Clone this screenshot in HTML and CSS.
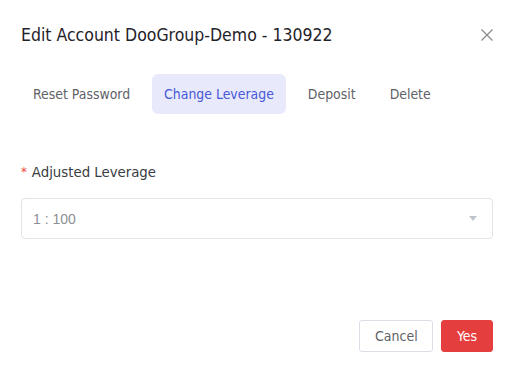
FILE: index.html
```html
<!DOCTYPE html>
<html lang="en">
<head>
    <meta charset="UTF-8">
    <title>Edit Account</title>
    <link rel="stylesheet" href="styles.css">
</head>
<body>
    <div class="dialog">
        <header class="dialog-header">
            <h2 class="dialog-title">Edit Account DooGroup-Demo - 130922</h2>
            <button class="close-btn" aria-label="Close">
                <svg width="12" height="12" viewBox="0 0 12 12">
                    <path d="M0.5 0.5 L11.5 11.5 M11.5 0.5 L0.5 11.5" stroke="#8a8a8a" stroke-width="1.2" fill="none"/>
                </svg>
            </button>
        </header>

        <nav class="tabs">
            <a href="#" class="tab">Reset Password</a>
            <a href="#" class="tab active">Change Leverage</a>
            <a href="#" class="tab">Deposit</a>
            <a href="#" class="tab">Delete</a>
        </nav>

        <form class="form">
            <label class="form-label"><span class="required">*</span>Adjusted Leverage</label>
            <div class="select">
                <span class="select-value">1 : 100</span>
                <span class="select-arrow"></span>
            </div>
        </form>

        <footer class="dialog-footer">
            <button class="btn btn-cancel">Cancel</button>
            <button class="btn btn-yes">Yes</button>
        </footer>
    </div>
</body>
</html>
```

FILE: styles.css
```css
* {
    margin: 0;
    padding: 0;
    box-sizing: border-box;
}

body {
    font-family: 'DejaVu Sans Condensed', 'DejaVu Sans', sans-serif;
    background: #ffffff;
    width: 513px;
    height: 367px;
    overflow: hidden;
}

.dialog {
    padding: 23px 20px 0 21px;
    height: 100%;
    display: flex;
    flex-direction: column;
}

.dialog-header {
    display: flex;
    justify-content: space-between;
    align-items: center;
    height: 24px;
}

.dialog-title {
    font-size: 17.5px;
    font-weight: 400;
    color: #1f2329;
}

.close-btn {
    border: none;
    background: none;
    width: 12px;
    height: 12px;
    display: flex;
}

.tabs {
    display: flex;
    gap: 10px;
    margin-top: 27px;
}

.tab {
    height: 40px;
    padding: 0 12px;
    display: flex;
    align-items: center;
    border-radius: 6px;
    font-size: 13.9px;
    color: #5f6266;
    text-decoration: none;
}

.tab.active {
    background: #e8eafb;
    color: #4858d6;
}

.form {
    margin-top: 47px;
}

.form-label {
    display: flex;
    align-items: center;
    font-size: 14.8px;
    color: #3a3d42;
    height: 20px;
}

.required {
    color: #f04438;
    font-size: 13px;
    margin-right: 5px;
}

.select {
    margin-top: 17px;
    height: 41px;
    border: 1px solid #e1e3e8;
    border-radius: 4px;
    display: flex;
    align-items: center;
    justify-content: space-between;
    padding: 0 15px 0 11px;
}

.select-value {
    font-family: 'Liberation Sans', Arial, sans-serif;
    font-size: 14px;
    color: #8d8f94;
}

.select-arrow {
    width: 0;
    height: 0;
    border-left: 4px solid transparent;
    border-right: 4px solid transparent;
    border-top: 5px solid #c0c4cc;
}

.dialog-footer {
    margin-top: auto;
    margin-bottom: 15px;
    display: flex;
    justify-content: flex-end;
    gap: 8px;
}

.btn {
    height: 32px;
    border-radius: 3px;
    font-family: inherit;
    font-size: 14px;
    padding: 0 15px;
}

.btn-cancel {
    width: 74px;
    background: #ffffff;
    border: 1px solid #dcdfe6;
    color: #606266;
}

.btn-yes {
    width: 52px;
    background: #e53e3e;
    border: 1px solid #e53e3e;
    color: #ffffff;
}
```
